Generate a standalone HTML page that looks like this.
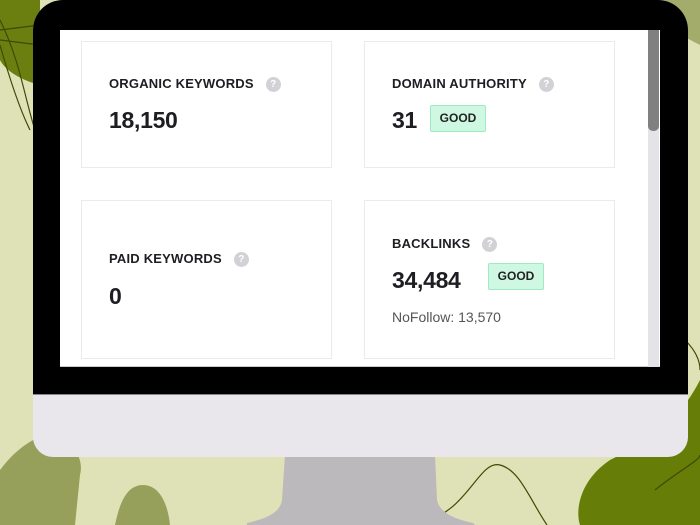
<!DOCTYPE html>
<html><head><style>
*{margin:0;padding:0;box-sizing:border-box}
body{width:700px;height:525px;overflow:hidden;background:#dfe2b6;position:relative;font-family:"Liberation Sans",sans-serif}
.abs{position:absolute}
.card{position:absolute;background:#fff;border:1px solid #ebebee;width:251px}
.t{position:absolute;left:27px;font-size:13px;font-weight:bold;color:#1d1d22;letter-spacing:0.2px;white-space:nowrap}
.q{display:inline-block;width:15px;height:15px;border-radius:50%;background:#d2d2d6;color:#fff;font-size:10px;text-align:center;line-height:15px;margin-left:12px;vertical-align:1px}
.n{position:absolute;left:27px;font-size:23px;font-weight:bold;color:#1d1d22;letter-spacing:-0.3px}
.g{position:absolute;background:#cff8e3;border:1px solid #9fe9c4;color:#222;font-size:12px;font-weight:bold;text-align:center;line-height:25px;height:27px;width:56px;border-radius:2px}
</style></head><body>
<svg class="abs" style="left:0;top:0" width="700" height="525">
<path d="M0 0 L40 0 L40 85 C20 80 5 70 0 60Z" fill="#6b7f10"/>
<path d="M0 20 C20 60 25 100 35 130 M0 45 C10 80 20 110 30 130 M0 30 L40 25 M0 40 L40 45" stroke="#3e4a05" stroke-width="1.2" fill="none"/>
<path d="M600 0 L700 0 L700 45 C670 30 640 10 600 0Z" fill="#a4ac6c"/>
<path d="M700 380 C680 420 650 440 610 460 C580 480 575 510 580 525 L700 525Z" fill="#667d08"/>
<path d="M0 470 C15 450 30 440 45 435 C70 440 85 455 80 475 L75 525 L0 525Z" fill="#97a05a"/>
<path d="M115 525 C120 500 128 485 143 485 C160 485 168 505 170 525Z" fill="#97a05a"/>
<path d="M315 520 C360 500 400 530 430 520 C470 505 480 460 500 465 C520 470 530 500 547 525" stroke="#3e4a05" stroke-width="1.2" fill="none"/>
<path d="M685 340 C695 350 700 360 700 370 M655 490 C680 470 700 460 700 455" stroke="#3e4a05" stroke-width="1.2" fill="none"/>
<path d="M285 455 L435 455 L437 500 C440 515 460 520 473 523 L475 525 L247 525 L247 523 C260 520 280 515 282 500Z" fill="#bbb9bc"/>
</svg>
<div class="abs" style="left:33px;top:0;width:655px;height:457px;background:#e9e7eb;border-radius:30px 30px 20px 20px;overflow:hidden">
<div class="abs" style="left:0;top:0;width:655px;height:395px;background:#000;border-bottom:1px solid #888"></div>
</div>
<div class="abs" style="left:60px;top:30px;width:600px;height:337px;background:#fff;border-bottom:1px solid #ccc">
<div class="abs" style="left:588px;top:0;width:11px;height:337px;background:#e4e3e7"></div>
<div class="abs" style="left:588px;top:0;width:11px;height:101px;background:#808080;border-radius:0 0 5px 5px"></div>
</div>
<div class="card" style="left:81px;top:41px;height:127px"><div class="t" style="top:34px">ORGANIC KEYWORDS<span class="q">?</span></div><div class="n" style="top:65px">18,150</div></div>
<div class="card" style="left:364px;top:41px;height:127px"><div class="t" style="top:34px">DOMAIN AUTHORITY<span class="q">?</span></div><div class="n" style="top:65px">31</div><div class="g" style="left:65px;top:63px">GOOD</div></div>
<div class="card" style="left:81px;top:200px;height:159px"><div class="t" style="top:50px">PAID KEYWORDS<span class="q">?</span></div><div class="n" style="top:82px">0</div></div>
<div class="card" style="left:364px;top:200px;height:159px"><div class="t" style="top:35px">BACKLINKS<span class="q">?</span></div><div class="n" style="top:66px">34,484</div><div class="g" style="left:123px;top:62px">GOOD</div><div class="abs" style="left:27px;top:108px;font-size:14px;color:#555">NoFollow: 13,570</div></div>
</body></html>
